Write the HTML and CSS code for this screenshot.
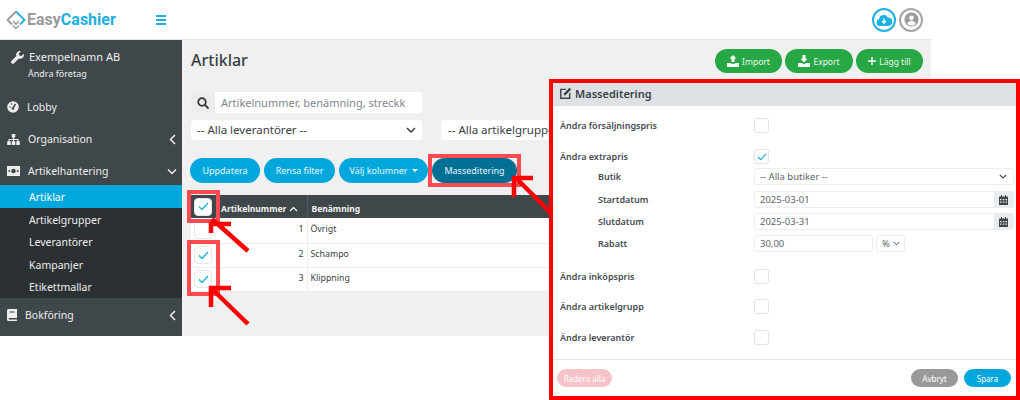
FILE: index.html
```html
<!DOCTYPE html>
<html lang="sv">
<head>
<meta charset="utf-8">
<title>EasyCashier</title>
<link rel="stylesheet" href="styles.css">
</head>
<body>
<div class="app">
  <header class="topbar">
    <div class="logo">
      <svg class="logo-mark" width="20" height="20" viewBox="0 0 20 20"><path d="M10 1.500 18.500 10 14 14.500" fill="none" stroke="#1db0e0" stroke-width="1.800"/><path d="M10 1.500 1.500 10 6 14.500" fill="none" stroke="#9a9a9a" stroke-width="1.800"/><path d="M7 11l3 3 3-3M10 18.500l-3-3M10 18.500l3-3" fill="none" stroke="#9a9a9a" stroke-width="1.600"/></svg>
      <span class="logo-text"><span class="logo-easy">Easy</span><span class="logo-cashier">Cashier</span></span>
    </div>
    <div class="burger"><i></i><i></i><i></i></div>
    <div class="top-icons">
      <span class="circle circle-blue"><svg width="16" height="12" viewBox="0 0 16 12"><path d="M4 12a3.500 3.500 0 0 1-.8-6.900A4.500 4.500 0 0 1 11.800 3.500 3.500 3.500 0 0 1 12.500 12z" fill="#1db0e0"/><path d="M8 4.500v4M6 7l2 2 2-2" fill="none" stroke="#fff" stroke-width="1.300"/></svg></span>
      <span class="circle circle-gray"><svg width="15" height="15" viewBox="0 0 16 16"><circle cx="8" cy="8" r="7.500" fill="#9b9b9b"/><circle cx="8" cy="6.200" r="2.500" fill="#fff"/><path d="M3.500 12.500c1-2.500 2.500-3 4.500-3s3.500.5 4.500 3a6 6 0 0 1-9 0z" fill="#fff"/></svg></span>
    </div>
  </header>
  <div class="shell">
    <nav class="side">
      <div class="company">
        <div class="company-name"><svg width="13" height="13" viewBox="0 0 13 13"><path d="M12.600 2.800 10.400 5 8.200 4.600 7.800 2.400 10 .3A3.600 3.600 0 0 0 5.400 4.900L.6 9.700a1.600 1.600 0 0 0 2.500 2.500L7.900 7.400A3.600 3.600 0 0 0 12.600 2.800z" fill="#eee"/></svg><span>Exempelnamn AB</span></div>
        <div class="company-sub">Ändra företag</div>
      </div>
      <a class="nav nav-lobby"><svg width="12" height="12" viewBox="0 0 12 12"><circle cx="6" cy="6" r="5.800" fill="#eee"/><path d="M6 7 8.500 3" stroke="#3f474a" stroke-width="1.500"/><circle cx="6" cy="7.500" r="1.300" fill="#3f474a"/><circle cx="3" cy="6" r=".8" fill="#3f474a"/><circle cx="4.500" cy="3" r=".8" fill="#3f474a"/></svg><span>Lobby</span></a>
      <a class="nav"><svg width="13" height="11" viewBox="0 0 13 11"><path d="M4.700 0h3.600v3.400H7.100v1.500h4.400v2.400h1.300v3.600H9.300V7.300h1.100V6H7.100v1.300h1.200v3.600H4.700V7.300h1.300V6H2.600v1.300h1.100v3.600H.2V7.300h1.300V4.900h4.500V3.400H4.700z" fill="#eee"/></svg><span>Organisation</span><svg class="chev" width="7" height="11" viewBox="0 0 7 11"><path d="M6 1 1.500 5.500 6 10" fill="none" stroke="#eee" stroke-width="1.500"/></svg></a>
      <a class="nav"><svg width="13" height="10" viewBox="0 0 13 10"><path d="M0 0h13v10H0z" fill="#eee"/><circle cx="6.500" cy="5" r="2.300" fill="#3f474a"/><circle cx="2.300" cy="5" r="1" fill="#3f474a"/><circle cx="10.700" cy="5" r="1" fill="#3f474a"/></svg><span>Artikelhantering</span><svg class="chev chev-down" width="10" height="7" viewBox="0 0 10 7"><path d="M1 1.500 5 5.500 9 1.500" fill="none" stroke="#eee" stroke-width="1.500"/></svg></a>
      <div class="subnav">
        <a class="sub sub-active">Artiklar</a>
        <a class="sub">Artikelgrupper</a>
        <a class="sub">Leverantörer</a>
        <a class="sub">Kampanjer</a>
        <a class="sub">Etikettmallar</a>
      </div>
      <a class="nav nav-book"><svg width="10" height="12" viewBox="0 0 10 12"><path d="M1.500 0H10v9H2a1 1 0 0 0 0 1.500h8V12H1.500A1.500 1.500 0 0 1 0 10.500v-9A1.500 1.500 0 0 1 1.500 0z" fill="#eee"/><path d="M2.500 2.500h5v1h-5z" fill="#3f474a"/></svg><span>Bokföring</span><svg class="chev" width="7" height="11" viewBox="0 0 7 11"><path d="M6 1 1.500 5.500 6 10" fill="none" stroke="#eee" stroke-width="1.500"/></svg></a>
    </nav>
    <main class="main">
      <div class="title-row">
        <h1>Artiklar</h1>
        <div class="actions">
          <button class="btn btn-green btn-import"><svg width="12" height="12" viewBox="0 0 12 12"><path d="M6 0 9.500 3.500H7.500V7h-3V3.500H2.500zM0 8h4v.8h4V8h4v4H0z" fill="#fff"/></svg>Import</button>
          <button class="btn btn-green btn-export"><svg width="12" height="12" viewBox="0 0 12 12"><path d="M4.500 0h3v3.800h2L6 7.500 2.500 3.800h2zM0 8h4l2 1.500L8 8h4v4H0z" fill="#fff"/></svg>Export</button>
          <button class="btn btn-green btn-add"><svg width="8" height="8" viewBox="0 0 10 10"><path d="M5 0v10M0 5h10" stroke="#fff" stroke-width="1.800"/></svg>Lägg till</button>
        </div>
      </div>
      <div class="search">
        <span class="search-ico"><svg width="12" height="12" viewBox="0 0 12 12"><circle cx="5" cy="5" r="3.800" fill="none" stroke="#333" stroke-width="1.700"/><path d="M8 8l3.500 3.500" stroke="#333" stroke-width="1.900"/></svg></span>
        <span class="search-input">Artikelnummer, benämning, streckk</span>
      </div>
      <div class="filters">
        <div class="select select-a"><span>-- Alla leverantörer --</span><svg width="10" height="6" viewBox="0 0 10 6"><path d="M1 1l4 4 4-4" fill="none" stroke="#333" stroke-width="1.400"/></svg></div>
        <div class="select select-b"><span>-- Alla artikelgrupper --</span></div>
      </div>
      <div class="toolbar">
        <button class="btn btn-blue btn-upd">Uppdatera</button>
        <button class="btn btn-blue btn-rensa">Rensa filter</button>
        <button class="btn btn-blue btn-cols">Välj kolumner<i class="caret"></i></button>
        <button class="btn btn-dark btn-mass">Masseditering</button>
      </div>
      <table class="grid">
        <thead>
          <tr><th class="c-check"><span class="cb cb-head"><svg width="11" height="9" viewBox="0 0 11 9"><path d="M1 4.500 4 7.500 10 1" fill="none" stroke="#1db0e0" stroke-width="1.400"/></svg></span></th><th class="c-num">Artikelnummer <svg width="9" height="6" viewBox="0 0 9 6"><path d="M1 5l3.500-3.500L8 5" fill="none" stroke="#fff" stroke-width="1.200"/></svg></th><th>Benämning</th></tr>
        </thead>
        <tbody>
          <tr class="row-first"><td class="c-check"><span class="cb"></span></td><td class="c-right">1</td><td>Övrigt</td></tr>
          <tr><td class="c-check"><span class="cb"><svg width="11" height="9" viewBox="0 0 11 9"><path d="M1 4.500 4 7.500 10 1" fill="none" stroke="#1db0e0" stroke-width="1.400"/></svg></span></td><td class="c-right">2</td><td>Schampo</td></tr>
          <tr><td class="c-check"><span class="cb"><svg width="11" height="9" viewBox="0 0 11 9"><path d="M1 4.500 4 7.500 10 1" fill="none" stroke="#1db0e0" stroke-width="1.400"/></svg></span></td><td class="c-right">3</td><td>Klippning</td></tr>
        </tbody>
      </table>
    </main>
  </div>
</div>

<div class="hl hl-mass"></div>
<div class="hl hl-head"></div>
<div class="hl hl-rows"></div>

<svg class="arrows" width="1020" height="400" viewBox="0 0 1020 400">
  <g fill="none" stroke="#f00" stroke-width="4.500">
    <path d="M212 219 248 251M231 224H211V233"/>
    <path d="M212 289 248 324M231 288H211V307"/>
    <path d="M515 177 552 214M533 178H514V197"/>
  </g>
</svg>

<section class="modal">
  <div class="modal-head"><svg width="13" height="13" viewBox="0 0 12 12"><path d="M1 1.500H7L5.700 2.800H2.300v6.900h6.900V6.300l1.300-1.300v6H1z" fill="#3a4145"/><path d="M4.500 6 9.700.8l1.500 1.500L6 7.500H4.500z" fill="#3a4145"/></svg><span>Masseditering</span></div>
  <div class="modal-body">
    <div class="mrow mrow-1"><label class="lab">Ändra försäljningspris</label><span class="mcb"></span></div>
    <div class="mrow mrow-2"><label class="lab">Ändra extrapris</label><span class="mcb"><svg width="10" height="8" viewBox="0 0 11 9"><path d="M1 4.500 4 7.500 10 1" fill="none" stroke="#1db0e0" stroke-width="1.400"/></svg></span></div>
    <div class="mrow mrow-3"><label class="lab lab-sub">Butik</label><div class="field field-select"><span>-- Alla butiker --</span><svg width="8" height="5" viewBox="0 0 8 5"><path d="M.8.800 4 4 7.200.8" fill="none" stroke="#444" stroke-width="1.100"/></svg></div></div>
    <div class="mrow mrow-4"><label class="lab lab-sub">Startdatum</label><div class="field field-date"><span>2025-03-01</span><i class="cal"><svg width="9" height="10" viewBox="0 0 9 10"><path d="M0 1.500h2V0h1v1.500h3V0h1v1.500h2V10H0z" fill="#3f474a"/><path d="M1 4h1.500v1.300H1zM3.800 4h1.500v1.300H3.800zM6.500 4H8v1.300H6.500zM1 6.500h1.500v1.300H1zM3.800 6.500h1.500v1.300H3.800zM6.500 6.500H8v1.300H6.500z" fill="#e9ecef"/></svg></i></div></div>
    <div class="mrow mrow-5"><label class="lab lab-sub">Slutdatum</label><div class="field field-date"><span>2025-03-31</span><i class="cal"><svg width="9" height="10" viewBox="0 0 9 10"><path d="M0 1.500h2V0h1v1.500h3V0h1v1.500h2V10H0z" fill="#3f474a"/><path d="M1 4h1.500v1.300H1zM3.800 4h1.500v1.300H3.800zM6.500 4H8v1.300H6.500zM1 6.500h1.500v1.300H1zM3.800 6.500h1.500v1.300H3.800zM6.500 6.500H8v1.300H6.500z" fill="#e9ecef"/></svg></i></div></div>
    <div class="mrow mrow-6"><label class="lab lab-sub">Rabatt</label><div class="field field-amount"><span>30,00</span></div><div class="field field-unit"><span>%</span><svg width="7" height="5" viewBox="0 0 8 5"><path d="M.8.800 4 4 7.200.8" fill="none" stroke="#444" stroke-width="1.100"/></svg></div></div>
    <div class="mrow mrow-7"><label class="lab">Ändra inköpspris</label><span class="mcb"></span></div>
    <div class="mrow mrow-8"><label class="lab">Ändra artikelgrupp</label><span class="mcb"></span></div>
    <div class="mrow mrow-9"><label class="lab">Ändra leverantör</label><span class="mcb"></span></div>
  </div>
  <div class="modal-foot">
    <button class="fbtn fbtn-del">Radera alla</button>
    <div class="foot-right">
      <button class="fbtn fbtn-cancel">Avbryt</button>
      <button class="fbtn fbtn-save">Spara</button>
    </div>
  </div>
</section>
</body>
</html>
```
FILE: styles.css
```css
* { box-sizing: border-box; }
html, body { margin: 0; padding: 0; }
body { width: 1020px; height: 400px; overflow: hidden; position: relative; background: #fff; font-family: "Noto Sans", "Open Sans", sans-serif; color: #3a4145; }

.app { width: 931px; }
.topbar { height: 40px; background: #fff; display: flex; align-items: center; border-bottom: 1px solid #e2e4e5; }
.logo { display: flex; align-items: center; margin-left: 6px; width: 150px; }
.logo-mark { flex: none; }
.logo-text { margin-left: 1px; font-family: Roboto, sans-serif; font-weight: 700; font-size: 16px; }
.logo-easy { color: #9a9a9a; }
.logo-cashier { color: #1db0e0; }
.burger { display: flex; flex-direction: column; gap: 2px; width: 10px; }
.burger i { display: block; height: 2px; background: #1db0e0; }
.top-icons { margin-left: auto; display: flex; gap: 3px; margin-right: 8px; }
.circle { width: 24px; height: 24px; border-radius: 50%; display: flex; align-items: center; justify-content: center; border: 2px solid; background: #fff; }
.circle-blue { border-color: #1db0e0; }
.circle-gray { border-color: #a5a5a5; }

.shell { display: flex; height: 296px; }
.side { width: 182px; flex: none; background: #3f474a; color: #eee; font-size: 10px; }
.company { padding: 9px 0 0 11px; height: 51px; }
.company-name { display: flex; align-items: center; gap: 5px; line-height: 16px; font-size: 11px; }
.company-sub { font-size: 9px; margin: 3px 0 0 17px; line-height: 12px; }
.nav { display: flex; align-items: center; height: 32px; padding-left: 7px; gap: 8px; position: relative; color: #eee; font-size: 10.500px; }
.nav-book { height: 38px; padding-bottom: 4px; }
.chev { position: absolute; right: 6px; top: 11px; }
.chev-down { right: 5px; top: 13px; }
.nav-book .chev { top: 12px; }
.subnav { background: #2b3033; margin-top: -2px; height: 113px; }
.sub { display: block; height: 22.500px; line-height: 24px; padding-left: 29px; color: #eee; font-size: 10.500px; }
.sub-active { background: #00a7dc; color: #fff; }

.main { flex: 1; background: #f0f0f0; padding: 9px 8px 0 9px; min-width: 0; }
.title-row { display: flex; align-items: center; justify-content: space-between; height: 24px; }
h1 { margin: -2px 0 0; font-size: 16px; font-weight: 500; color: #3a4145; line-height: 24px; }
.actions { display: flex; gap: 3px; }
.btn { border: 0; border-radius: 13px; font: 400 9px "Noto Sans", sans-serif; display: inline-flex; align-items: center; justify-content: center; padding: 0; gap: 3px; }
.btn-green { background: #28a745; height: 24px; color: #eefbf0; font-size: 8.500px; }
.btn-import { width: 67px; }
.btn-export { width: 68px; }
.btn-add { width: 67px; }
.search { display: flex; height: 21px; width: 231px; margin-top: 19px; }
.search-ico { width: 24px; background: #ececec; border-radius: 4px 0 0 4px; display: flex; align-items: center; justify-content: center; }
.search-input { flex: 1; background: #fff; border-radius: 0 4px 4px 0; font-size: 11px; color: #80868a; line-height: 21px; padding-left: 6px; white-space: nowrap; overflow: hidden; }
.filters { display: flex; gap: 19px; margin-top: 7px; }
.select { height: 20px; background: #fff; border-radius: 4px; font-size: 11.500px; line-height: 20px; padding: 0 6px; display: flex; align-items: center; justify-content: space-between; color: #3a4145; }
.select-a { width: 231px; }
.select-b { width: 200px; padding-left: 7px; }
.toolbar { display: flex; gap: 4px; margin-top: 18px; margin-left: -1px; }
.btn-blue { background: #00a7dc; height: 25px; color: #e8f8fe; }
.btn-dark { background: #006f94; height: 25px; color: #e8f8fe; }
.btn-upd { width: 70px; }
.btn-rensa { width: 71px; }
.btn-cols { width: 89px; gap: 4px; }
.btn-mass { width: 85px; }
.caret { width: 0; height: 0; border-left: 3px solid transparent; border-right: 3px solid transparent; border-top: 3px solid #fff; }

.grid { border-collapse: collapse; margin-top: 12px; width: 400px; font-size: 8.800px; background: #fff; table-layout: fixed; }
.grid th { background: #3f474a; color: #f4f4f4; font-weight: 700; height: 23px; padding: 3px 4px 0; text-align: left; font-size: 8.500px; white-space: nowrap; border-left: 1px solid #555c5f; }
.grid th.c-check { border-left: 0; padding: 0 0 0 3px; }
.grid td { height: 24px; padding: 0 3px 2px; border-bottom: 1px solid #ededed; border-left: 1px solid #eceef0; color: #3a4145; }
.grid .row-first td { height: 25px; }
.grid td.c-check { border-left: 0; padding-bottom: 0; }
.grid .c-check { width: 26px; padding-left: 3px; }
.grid .c-num { width: 90px; }
.c-right { text-align: right; }
.grid tr > *:nth-child(2) { width: 90px; border-left: 0; }
.cb { display: flex; width: 18px; height: 18px; border: 1px solid #e3e6ea; border-radius: 4px; background: #fff; align-items: center; justify-content: center; }

.hl { position: absolute; border: 4px solid #fb4a52; }
.hl-mass { left: 428px; top: 154px; width: 93px; height: 33px; }
.hl-head { left: 187px; top: 190px; width: 33px; height: 33px; }
.hl-rows { left: 187px; top: 240px; width: 33px; height: 56px; }
.arrows { position: absolute; left: 0; top: 0; }

.modal { position: absolute; left: 549px; top: 79px; width: 471px; height: 321px; background: #fff; border: 4px solid #f00; display: flex; flex-direction: column; font-size: 9px; color: #3a4145; }
.modal-head { height: 23px; background: #dee2e6; display: flex; align-items: center; gap: 3px; padding: 0 0 3px 6px; font-size: 11px; font-weight: 600; }
.modal-body { flex: 1; padding-left: 7px; }
.mrow { display: flex; align-items: center; height: 15px; }
.lab { width: 194px; font-weight: 600; white-space: nowrap; flex: none; color: #444b4f; }
.lab-sub { padding-left: 38px; }
.mcb { width: 15px; height: 15px; border: 1px solid #e0e3e7; border-radius: 3px; display: flex; align-items: center; justify-content: center; background: #fff; }
.mrow-1 { margin-top: 12px; }
.mrow-2 { margin-top: 16px; }
.mrow-3, .mrow-4, .mrow-5, .mrow-6 { height: 17px; }
.mrow-3 { margin-top: 4px; }
.mrow-4 { margin-top: 6px; }
.mrow-5 { margin-top: 5px; }
.mrow-6 { margin-top: 5px; }
.mrow-7 { margin-top: 17px; }
.mrow-8 { margin-top: 15px; }
.mrow-9 { margin-top: 16px; }
.field { height: 17px; border: 1px solid #eceef0; border-radius: 3px; background: #fff; display: flex; align-items: center; color: #5c6468; font-size: 9.500px; padding-left: 5px; }
.field-select, .field-date { width: 260px; justify-content: space-between; }
.field-select { padding-right: 6px; }
.field-date { padding-right: 0; }
.cal { width: 19px; height: 17px; background: #e9ecef; display: flex; align-items: center; justify-content: center; border-radius: 0 3px 3px 0; }
.field-amount { width: 119px; }
.field-unit { width: 29px; margin-left: 3px; gap: 3px; }
.modal-foot { height: 37px; border-top: 1px solid #e3e5e8; display: flex; align-items: center; justify-content: space-between; padding: 0 5px 0 4px; }
.foot-right { display: flex; gap: 6px; }
.fbtn { height: 18px; border: 0; border-radius: 9px; color: #fff; font: 400 8px "Noto Sans", sans-serif; padding: 0; }
.fbtn-del { width: 55px; background: #f6c3c9; }
.fbtn-cancel { width: 47px; background: #999; }
.fbtn-save { width: 47px; background: #00a7dc; }
```
